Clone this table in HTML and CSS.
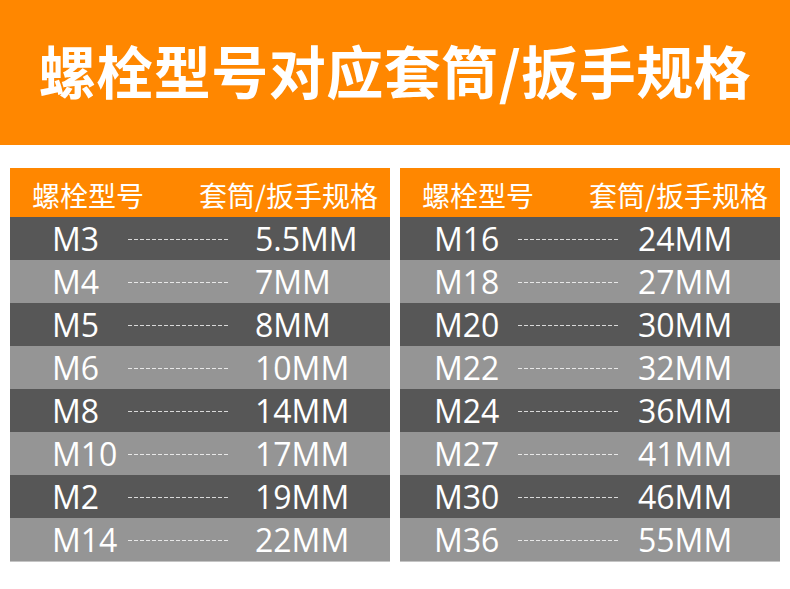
FILE: index.html
```html
<!DOCTYPE html>
<html lang="zh">
<head>
<meta charset="utf-8">
<link rel="stylesheet" href="styles.css">
</head>
<body>
<header class="banner"><h1 class="title">螺栓型号对应套筒/扳手规格</h1></header>
<main class="tables">
  <section class="table table--left">
    <div class="thead"><span>螺栓型号</span><span>套筒/扳手规格</span></div>
    <div class="row dark"><span class="bolt">M3</span><i class="dash"></i><span class="size">5.5MM</span></div>
    <div class="row light"><span class="bolt">M4</span><i class="dash"></i><span class="size">7MM</span></div>
    <div class="row dark"><span class="bolt">M5</span><i class="dash"></i><span class="size">8MM</span></div>
    <div class="row light"><span class="bolt">M6</span><i class="dash"></i><span class="size">10MM</span></div>
    <div class="row dark"><span class="bolt">M8</span><i class="dash"></i><span class="size">14MM</span></div>
    <div class="row light"><span class="bolt">M10</span><i class="dash"></i><span class="size">17MM</span></div>
    <div class="row dark"><span class="bolt">M2</span><i class="dash"></i><span class="size">19MM</span></div>
    <div class="row light"><span class="bolt">M14</span><i class="dash"></i><span class="size">22MM</span></div>
  </section>
  <section class="table table--right">
    <div class="thead"><span>螺栓型号</span><span>套筒/扳手规格</span></div>
    <div class="row dark"><span class="bolt">M16</span><i class="dash"></i><span class="size">24MM</span></div>
    <div class="row light"><span class="bolt">M18</span><i class="dash"></i><span class="size">27MM</span></div>
    <div class="row dark"><span class="bolt">M20</span><i class="dash"></i><span class="size">30MM</span></div>
    <div class="row light"><span class="bolt">M22</span><i class="dash"></i><span class="size">32MM</span></div>
    <div class="row dark"><span class="bolt">M24</span><i class="dash"></i><span class="size">36MM</span></div>
    <div class="row light"><span class="bolt">M27</span><i class="dash"></i><span class="size">41MM</span></div>
    <div class="row dark"><span class="bolt">M30</span><i class="dash"></i><span class="size">46MM</span></div>
    <div class="row light"><span class="bolt">M36</span><i class="dash"></i><span class="size">55MM</span></div>
  </section>
</main>
</body>
</html>
```
FILE: styles.css
```css
html, body {
  margin: 0;
  padding: 0;
  background: #ffffff;
}
body {
  width: 790px;
  height: 589px;
  overflow: hidden;
  font-family: "Open Sans", "Noto Sans CJK SC", sans-serif;
}
.banner {
  height: 145px;
  background: #ff8700;
  display: flex;
  align-items: center;
  justify-content: center;
}
.title {
  margin: 0;
  color: #ffffff;
  font-family: "Noto Sans CJK SC", sans-serif;
  font-size: 57px;
  font-weight: 700;
  letter-spacing: 0.5px;
  line-height: 1;
  padding-bottom: 6px;
}
.tables {
  display: flex;
  gap: 10px;
  padding: 23px 10px 0;
}
.table {
  width: 380px;
  display: flex;
  flex-direction: column;
  border-bottom: 1px solid #c4c4c4;
}
.thead {
  height: 49px;
  background: #ff8700;
  color: #ffffff;
  display: flex;
  justify-content: space-between;
  align-items: center;
  padding: 5px 12px 0 22px;
  box-sizing: border-box;
  font-family: "Noto Sans CJK SC", sans-serif;
  font-size: 28px;
  font-weight: 400;
}
.row {
  height: 43px;
  display: grid;
  align-items: center;
  color: #ffffff;
  font-size: 32px;
  font-weight: 400;
  line-height: 43px;
  box-sizing: border-box;
}
.table--left .row {
  grid-template-columns: 76px 100px 1fr;
  padding-left: 42px;
}
.table--left .size { padding-left: 27px; }
.table--right .row {
  grid-template-columns: 84px 100px 1fr;
  padding-left: 34px;
}
.table--right .size { padding-left: 20px; }
.dark { background: #575757; }
.light { background: #959595; }
.dash {
  display: block;
  height: 1px;
  width: 100px;
  margin-top: 2px;
  background: repeating-linear-gradient(90deg, #d9d9d9 0 4px, transparent 4px 6px);
}
.light .dash {
  background: repeating-linear-gradient(90deg, #e8e8e8 0 4px, transparent 4px 6px);
}
```
